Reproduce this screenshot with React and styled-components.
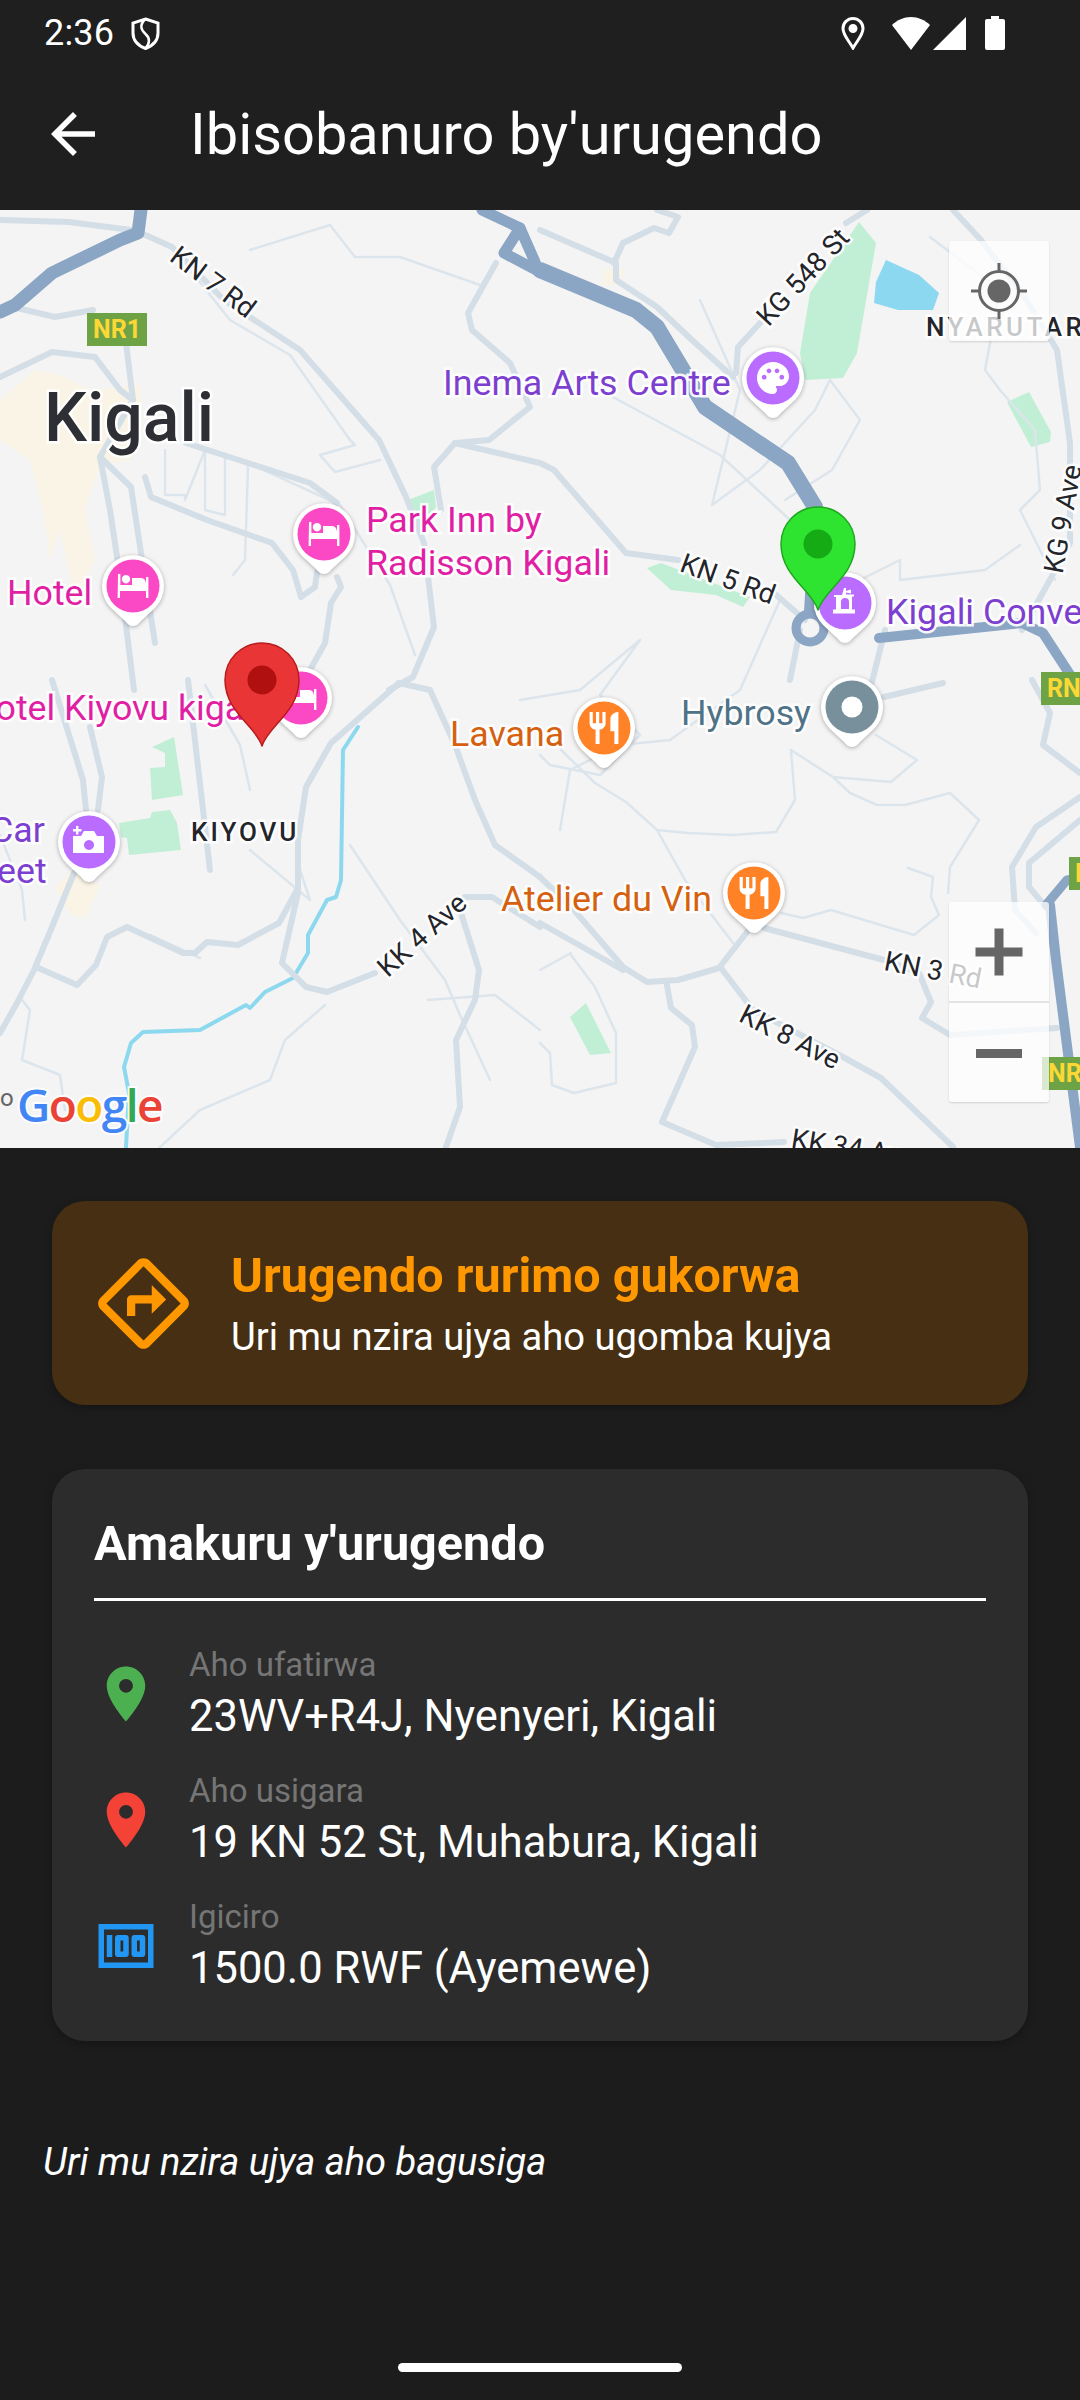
import React from "react";
import styled, { createGlobalStyle } from "styled-components";

const GlobalStyle = createGlobalStyle`
  html, body {
    margin: 0;
    padding: 0;
    background: #1c1c1c;
  }
  * {
    box-sizing: border-box;
  }
`;

// road data is in page pixels, the svg viewBox starts at the top of the map
const mainRoads = [
  { points: "0,312 15,305 52,273 120,240 138,233 141,210", width: 13 },
  { points: "482,210 520,228 535,262", width: 11 },
  { points: "520,228 504,253 540,272", width: 11 },
  { points: "540,270 636,310 657,327 705,407 788,463 815,507", width: 16 },
  { points: "815,507 809,612", width: 10 },
  { points: "879,638 1022,623 1043,633 1080,690", width: 10 },
  { points: "1046,905 1067,880 1080,878", width: 9 },
  { points: "1050,905 1056,960 1080,1147", width: 10 },
];

const roads = [
  "141,233 172,247 224,300 300,350 379,440 406,497 424,543 434,627 413,677 389,690",
  "0,220 69,222 131,230",
  "17,308 55,317 93,310",
  "126,343 133,400 100,457 110,510 120,577 134,690",
  "186,443 248,463 310,483 337,503",
  "100,457 131,487 141,553 155,643",
  "145,477 151,497 207,520 272,543 293,570 301,597 315,587 317,572",
  "337,577 341,587 331,603 325,643 310,670",
  "0,377 52,352 95,357 120,390 133,400",
  "496,263 468,313 472,330 510,363 530,407 489,440 455,443 434,467 441,510",
  "455,443 540,463 554,470 626,553 678,560",
  "774,593 805,620",
  "540,230 616,263 616,280 657,307 692,340 733,377",
  "614,263 623,243 654,228 669,233 678,217 657,210",
  "760,323 738,347 736,373",
  "846,223 867,210",
  "953,210 981,240 1022,293 1057,350 1070,443 1070,543 1046,587 1022,630",
  "52,680 83,780 86,810",
  "90,727 102,777 98,810",
  "188,680 210,870",
  "399,683 331,743 306,787 298,840 298,893 282,963 306,987 327,992 375,973",
  "465,897 492,897 540,927",
  "298,888 279,923 238,945 207,942 195,953 183,953 127,927 107,937 96,965 77,985 36,967",
  "74,873 52,927 34,970 17,1003 0,1033",
  "461,913 479,970 475,1000 456,1040 460,1107 446,1147",
  "399,683 430,690 455,745 475,800 495,845 540,877",
  "540,877 574,910 623,967 647,982 678,980 719,968 747,932",
  "540,923 623,970",
  "764,928 884,960 919,973 931,1002 922,1018 950,1035 1057,1028",
  "721,968 753,1010 843,1057 881,1078 953,1147",
  "667,985 671,1008 692,1025 695,1047 662,1122 716,1145 784,1142",
  "1032,680 1050,713 1043,745 1080,773",
  "1080,797 1036,827 1012,867 1015,910 1036,933",
  "1080,820 1029,863 1029,887 1046,907",
  "943,683 884,697",
  "800,630 790,680",
  "885,630 870,690",
];

const thinRoads = [
  "791,750 795,800 776,832 733,835 688,833 657,830 626,802 595,783 561,750",
  "657,830 685,880 733,943",
  "791,750 833,777 891,782 917,760 876,735",
  "833,777 850,793 877,805 905,805 950,793 979,820 950,867 948,893",
  "781,913 803,918 831,910 914,935 939,915 931,897 933,877 908,868",
  "571,953 540,970",
  "571,955 595,987 616,1033 616,1083 574,1093 552,1085 550,1053 540,1043",
  "172,247 230,320 290,355 350,440 355,445 320,455 335,472 380,460",
  "165,450 165,495 185,495 185,500 205,450 205,510 225,515 225,455 248,465 245,560 233,575",
  "248,463 340,505 390,585 415,655",
  "250,250 330,225 355,257 400,257 480,285",
  "700,300 740,390 712,505 760,470 815,410 830,380 860,420 832,470 785,500",
  "600,390 720,455 790,520 810,590",
  "930,237 1000,290 985,370 1000,390 1035,430 1040,490 1020,510 1055,580",
  "840,590 900,560 900,580 985,570 1020,545",
  "780,600 740,690 670,740 620,745 570,770 560,830",
  "640,640 600,695 640,735 600,775 550,765 540,755",
  "520,700 580,690 640,640",
  "250,790 240,745 205,685",
  "250,850 310,900 300,870",
  "350,845 400,920 445,980 460,1015 490,1080",
  "428,1000 495,995 540,1030",
  "325,1005 285,1040 270,1080 200,1110 130,1175",
  "22,1000 30,1010 22,1060 60,1075 65,1110",
  "0,835 22,890 25,920",
  "150,935 200,958",
];

const parks = [
  "152,747 174,737 183,795 152,800 150,768 165,767 165,753",
  "119,823 150,818 152,812 170,810 177,823 181,850 129,855 127,838 121,837",
  "859,222 876,243 857,353 843,378 805,380 800,353 810,293",
  "1007,402 1029,392 1051,432 1050,442 1031,447",
  "647,568 661,563 750,597 743,607 716,595 671,590",
  "408,500 434,490 436,507 417,533",
  "570,1017 586,1003 611,1053 590,1055",
];

const sand = [
  "0,400 35,370 60,375 90,390 140,385 142,430 130,460 100,465 88,500 85,510 95,560 75,600 60,530 50,560 45,520 30,460 0,440",
  "55,887 72,870 100,885 85,918 70,915",
  "604,270 624,268 620,285 602,285",
];

const river =
  "358,727 343,750 341,880 336,897 327,900 308,935 308,953 293,978 265,992 250,1008 246,1005 200,1030 143,1032 131,1043 124,1067 129,1093 126,1147";
const water = "886,260 919,275 939,293 933,310 898,310 874,303 876,282";

const PURPLE = "#7c3fd0";
const PINK = "#e01fa4";
const ORANGE = "#d5610f";
const DARK = "#23252a";

const labels = [
  { text: "Kigali", x: 44, y: 416, size: 68, weight: 500, color: "#2d2f34" },
  { text: "Inema Arts Centre", x: 443, y: 382, size: 35.75, color: PURPLE },
  { text: "Park Inn by", x: 366, y: 519, size: 35.75, color: PINK },
  { text: "Radisson Kigali", x: 366, y: 562, size: 35.75, color: PINK },
  { text: "Hotel", x: 7, y: 592, size: 35.75, color: PINK },
  { text: "Hotel Kiyovu kigali", x: -30, y: 707, size: 35.75, color: PINK },
  { text: "Car", x: -10, y: 829, size: 35.75, color: PURPLE },
  { text: "eet", x: -3, y: 870, size: 35.75, color: PURPLE },
  { text: "Kigali Convention Centre", x: 886, y: 611, size: 35.75, color: PURPLE },
  { text: "Hybrosy", x: 681, y: 712, size: 35.75, color: "#4f7287" },
  { text: "Lavana", x: 450, y: 733, size: 35.75, color: ORANGE },
  { text: "Atelier du Vin", x: 501, y: 898, size: 35.75, color: ORANGE },
  { text: "KIYOVU", x: 191, y: 830, size: 26, weight: 500, spacing: 3, color: DARK },
  { text: "NYARUTARAMA", x: 926, y: 325, size: 26, weight: 500, spacing: 3.5, color: DARK },
  { text: "KN 7 Rd", x: 213, y: 280, size: 27.5, rotate: 37, center: true, color: DARK },
  { text: "KG 548 St", x: 803, y: 275, size: 27.5, rotate: -47, center: true, color: DARK },
  { text: "KN 5 Rd", x: 728, y: 577, size: 27.5, rotate: 20, center: true, color: DARK },
  { text: "KG 9 Ave", x: 1063, y: 517, size: 27.5, rotate: -80, center: true, color: DARK },
  { text: "KK 4 Ave", x: 422, y: 933, size: 27.5, rotate: -42, center: true, color: DARK },
  { text: "KK 8 Ave", x: 790, y: 1035, size: 27.5, rotate: 27, center: true, color: DARK },
  { text: "KN 3 Rd", x: 933, y: 968, size: 27.5, rotate: 11, center: true, color: DARK },
  { text: "KK 34 Ave", x: 853, y: 1146, size: 27.5, rotate: 9, center: true, color: DARK },
];

const shields = [
  { text: "NR1", x: 87, y: 313, w: 60 },
  { text: "RN1", x: 1041, y: 672, w: 60 },
  { text: "NR1", x: 1069, y: 857, w: 60 },
  { text: "NR1", x: 1042, y: 1057, w: 60 },
];

const BedGlyph = () => (
  <path d="M-15 -12h2.4v11H13v-8h2.4V12H13V5h-26v7h-2.4z M-7 -11a4.2 4.2 0 1 1 -.01 0z M-1 -8h9c2.5 0 5 2 5 6v1H-1z" />
);
const PaletteGlyph = () => (
  <g transform="translate(-19.2 -19.2) scale(1.6)">
    <path d="M12 2C6.49 2 2 6.49 2 12s4.49 10 10 10c1.38 0 2.5-1.12 2.5-2.5 0-.61-.23-1.2-.64-1.67-.08-.1-.13-.21-.13-.33 0-.28.22-.5.5-.5H16c3.31 0 6-2.69 6-6 0-4.96-4.49-9-10-9zm5.5 11c-.83 0-1.5-.67-1.5-1.5s.67-1.5 1.5-1.5 1.5.67 1.5 1.5-.67 1.5-1.5 1.5zm-3-4c-.83 0-1.5-.67-1.5-1.5S13.67 6 14.5 6s1.5.67 1.5 1.5S15.33 9 14.5 9zM5 11.5c0-.83.67-1.5 1.5-1.5s1.5.67 1.5 1.5S7.33 13 6.5 13 5 12.33 5 11.5zm6-4c0 .83-.67 1.5-1.5 1.5S8 8.33 8 7.5 8.67 6 9.5 6s1.5.67 1.5 1.5z" />
  </g>
);
const CameraGlyph = () => (
  <path
    fillRule="evenodd"
    d="M-16 -6h8l3 -5h10l3 5h7v17h-31z M0 -2a5 5 0 1 0 .01 0z M-16 -13h3v-3h2.4v3h3v2.4h-3v3h-2.4v-3h-3z"
  />
);
const MuseumGlyph = () => (
  <path
    fillRule="evenodd"
    d="M-1 -15h2v3l5 -1.5v4l-5 -1v2h8v2h-2v13h3v4h-22v-4h3V-6h-2v-2h8z M-4 -1v7h8v-7a4 4 0 0 0 -8 0z"
  />
);
const FoodGlyph = () => (
  <g transform="translate(-19.2 -19.2) scale(1.6)">
    <path d="M11 9H9V2H7v7H5V2H3v7c0 2.12 1.66 3.84 3.75 3.97V22h2.5v-9.03C11.34 12.84 13 11.12 13 9V2h-2v7zm5-3v8h2.5v8H21V2c-2.76 0-5 2.24-5 4z" />
  </g>
);
const DotGlyph = () => <circle r="10.5" />;

const pois = [
  { x: 324, y: 534, color: "#fb48c4", Glyph: BedGlyph },
  { x: 133, y: 586, color: "#fb48c4", Glyph: BedGlyph },
  { x: 301, y: 698, color: "#fb48c4", Glyph: BedGlyph },
  { x: 89, y: 842, color: "#b96cff", Glyph: CameraGlyph },
  { x: 773, y: 378, color: "#b96cff", Glyph: PaletteGlyph },
  { x: 845, y: 603, color: "#b96cff", Glyph: MuseumGlyph },
  { x: 852, y: 707, color: "#78909c", Glyph: DotGlyph },
  { x: 604, y: 728, color: "#ff8226", Glyph: FoodGlyph },
  { x: 754, y: 893, color: "#ff8226", Glyph: FoodGlyph },
];

const Page = styled.div`
  width: 1080px;
  height: 2400px;
  background: #1c1c1c;
  color: #fff;
  font-family: Roboto, "Liberation Sans", sans-serif;
  display: flex;
  flex-direction: column;
  overflow: hidden;
`;

const StatusBar = styled.div`
  height: 66px;
  padding: 0 75px 0 44px;
  background: #1f1f1f;
  display: flex;
  align-items: center;
  justify-content: space-between;
`;

const StatusTime = styled.div`
  display: flex;
  align-items: center;
  gap: 17px;
  font-size: 36px;
  letter-spacing: 0.2px;
`;

const StatusIcons = styled.div`
  display: flex;
  align-items: center;
`;

const StatusGlyph = styled.svg`
  display: block;
  margin-right: ${(p) => p.$gap || 0}px;
`;

const AppBar = styled.header`
  height: 144px;
  background: #1f1f1f;
  display: flex;
  align-items: center;
  padding-left: 40px;
  padding-bottom: 8px;
`;

const BackIcon = styled.svg`
  width: 66px;
  height: 66px;
  fill: #fff;
  margin-right: 84px;
`;

const Title = styled.h1`
  margin: 0;
  font-size: 57.75px;
  font-weight: 400;
`;

const MapArea = styled.section`
  position: relative;
  height: 938px;
  background: #f4f4f4;
  overflow: hidden;
  flex: none;
`;

const MapSvg = styled.svg`
  position: absolute;
  inset: 0;
  width: 1080px;
  height: 938px;
`;

const MapLabel = styled.div`
  position: absolute;
  left: ${(p) => p.$x}px;
  top: ${(p) => p.$y - 208}px;
  transform: translate(${(p) => (p.$center ? "-50%" : "0")}, -50%) rotate(${(p) => p.$rotate || 0}deg);
  font-size: ${(p) => p.$size}px;
  font-weight: ${(p) => p.$weight || 400};
  letter-spacing: ${(p) => p.$spacing || 0}px;
  color: ${(p) => p.$color};
  white-space: nowrap;
  line-height: 1;
  -webkit-text-stroke: 5px rgba(255, 255, 255, 0.92);
  paint-order: stroke fill;
`;

const Shield = styled.div`
  position: absolute;
  left: ${(p) => p.$x}px;
  top: ${(p) => p.$y - 210}px;
  width: ${(p) => p.$w}px;
  height: 33px;
  background: #6ea345;
  color: #fdd835;
  font-size: 25px;
  font-weight: 700;
  display: flex;
  align-items: center;
  justify-content: center;
`;

const Poi = styled.svg`
  position: absolute;
  left: ${(p) => p.$x - 40}px;
  top: ${(p) => p.$y - 250}px;
  width: 80px;
  height: 90px;
  filter: drop-shadow(0 1px 2px rgba(0, 0, 0, 0.3));
`;

const Pin = styled.svg`
  position: absolute;
  left: ${(p) => p.$x - 40}px;
  top: ${(p) => p.$y - 250}px;
  width: 80px;
  height: 115px;
`;

const GoogleMark = styled.div`
  position: absolute;
  left: 17px;
  bottom: 21px;
  font-family: "Open Sans", Roboto, sans-serif;
  font-size: 46px;
  font-weight: 600;
  letter-spacing: -1.6px;
  line-height: 1;
  -webkit-text-stroke: 4px rgba(255, 255, 255, 0.85);
  paint-order: stroke fill;
`;

const GoogleLetter = styled.span`
  color: ${(p) => p.$color};
`;

const Remnant = styled.div`
  position: absolute;
  left: 0;
  bottom: 36px;
  font-size: 24px;
  color: #666;
`;

const MapButton = styled.div`
  position: absolute;
  left: 949px;
  width: 100px;
  height: 100px;
  background: rgba(255, 255, 255, 0.75);
  border-radius: 3px;
  box-shadow: 0 1px 2px rgba(0, 0, 0, 0.15);
  display: flex;
  align-items: center;
  justify-content: center;
  top: ${(p) => p.$top}px;
`;

const ZoomGroup = styled.div`
  position: absolute;
  left: 949px;
  top: 692px;
  width: 100px;
  height: 200px;
  background: rgba(255, 255, 255, 0.75);
  border-radius: 3px;
  box-shadow: 0 1px 2px rgba(0, 0, 0, 0.15);
  display: flex;
  flex-direction: column;
`;

const ZoomButton = styled.div`
  flex: 1;
  display: flex;
  align-items: center;
  justify-content: center;
  border-bottom: ${(p) => (p.$divider ? "2px solid rgba(220, 220, 220, 0.8)" : "none")};
`;

const MapIcon = styled.svg`
  width: 60px;
  height: 60px;
  fill: #666;
`;

const Content = styled.main`
  flex: 1;
  padding: 53px 52px 0;
  display: flex;
  flex-direction: column;
`;

const StatusCard = styled.div`
  height: 204px;
  background: #462f12;
  border-radius: 33px;
  box-shadow: 0 3px 8px rgba(0, 0, 0, 0.25);
  padding: 0 0 0 42px;
  display: flex;
  align-items: center;
  gap: 38px;
`;

const DirectionIcon = styled.svg`
  width: 99px;
  height: 99px;
  fill: #ff9800;
  flex: none;
`;

const StatusTitle = styled.div`
  font-size: 48.5px;
  font-weight: 700;
  color: #ff9800;
  line-height: 58px;
  margin-bottom: 9px;
`;

const StatusText = styled.div`
  font-size: 38.2px;
  line-height: 46px;
`;

const InfoCard = styled.div`
  margin-top: 64px;
  height: 572px;
  background: #2c2c2c;
  border-radius: 33px;
  box-shadow: 0 3px 8px rgba(0, 0, 0, 0.25);
  padding: 46px 42px 0;
`;

const InfoHeading = styled.h2`
  margin: 0;
  font-size: 48.6px;
  font-weight: 700;
  line-height: 58px;
`;

const Divider = styled.div`
  height: 3px;
  background: #fff;
  margin: 25px 0 32px;
`;

const InfoRow = styled.div`
  height: 126px;
  padding-bottom: 4px;
  display: flex;
  align-items: center;
`;

const RowIcon = styled.svg`
  width: 66px;
  height: 66px;
  flex: none;
  fill: ${(p) => p.$color};
  margin: 0 30px 0 -1px;
`;

const RowLabel = styled.div`
  font-size: 33px;
  line-height: 36px;
  color: #757575;
`;

const RowValue = styled.div`
  font-size: 43.5px;
  line-height: 50px;
  margin-top: 9px;
`;

const Note = styled.div`
  margin: 99px 0 0 -9px;
  font-size: 38.1px;
  font-style: italic;
  line-height: 44px;
`;

const HomeBar = styled.div`
  position: absolute;
  left: 398px;
  top: 2363px;
  width: 284px;
  height: 9px;
  border-radius: 5px;
  background: #fff;
`;

const Shell = styled.div`
  position: relative;
  width: 1080px;
  height: 2400px;
`;

const PIN_PATH = "M0 66 C-6 46 -37 32 -37 0 A37 37 0 1 1 37 0 C37 32 6 46 0 66Z";
const LOCATION_PATH =
  "M12 2C8.13 2 5 5.13 5 9c0 5.25 7 13 7 13s7-7.75 7-13c0-3.87-3.13-7-7-7zm0 9.5c-1.38 0-2.5-1.12-2.5-2.5s1.12-2.5 2.5-2.5 2.5 1.12 2.5 2.5-1.12 2.5-2.5 2.5z";

const Line = ({ points, color, width }) => (
  <polyline points={points} fill="none" stroke={color} strokeWidth={width} strokeLinejoin="round" strokeLinecap="round" />
);

const MapView = () => (
  <MapArea>
    <MapSvg viewBox="0 210 1080 938">
      {sand.map((p) => (
        <polygon key={p} points={p} fill="#f9f4e6" />
      ))}
      {parks.map((p) => (
        <polygon key={p} points={p} fill="#c0efd5" />
      ))}
      <polygon points={water} fill="#8cd8f0" />
      {thinRoads.map((p) => (
        <Line key={p} points={p} color="#dde5ec" width={2.5} />
      ))}
      <Line points={river} color="#8cd8ee" width={4} />
      {roads.map((p) => (
        <Line key={p} points={p} color="#d4dee7" width={6} />
      ))}
      {mainRoads.map((r) => (
        <Line key={r.points} points={r.points} color="#8ba5c4" width={r.width} />
      ))}
      <circle cx="810" cy="628" r="14" fill="none" stroke="#8ba5c4" strokeWidth="9" />
    </MapSvg>

    {labels.map((l) => (
      <MapLabel
        key={l.text + l.y}
        $x={l.x}
        $y={l.y}
        $size={l.size}
        $weight={l.weight}
        $spacing={l.spacing}
        $rotate={l.rotate}
        $center={l.center}
        $color={l.color}
      >
        {l.text}
      </MapLabel>
    ))}

    {shields.map((s) => (
      <Shield key={s.x} $x={s.x} $y={s.y} $w={s.w}>
        {s.text}
      </Shield>
    ))}

    {pois.map(({ x, y, color, Glyph }) => (
      <Poi key={x} $x={x} $y={y} viewBox="-40 -40 80 90">
        <path d="M0 40 C-4 40 -6 37 -9 34 L-22 22 A31 31 0 1 1 22 22 L9 34 C6 37 4 40 0 40Z" fill="#fff" />
        <circle r="26.5" fill={color} />
        <g fill="#fff">
          <Glyph />
        </g>
      </Poi>
    ))}

    <Pin $x={262} $y={680} viewBox="-40 -40 80 115">
      <path d={PIN_PATH} fill="#e93535" stroke="#b71c1c" strokeWidth="1.5" strokeLinejoin="round" />
      <circle r="14.5" fill="#b01010" />
    </Pin>
    <Pin $x={818} $y={544} viewBox="-40 -40 80 115">
      <path d={PIN_PATH} fill="#2fe331" stroke="#1fa81f" strokeWidth="1.5" strokeLinejoin="round" />
      <circle r="14.5" fill="#14ab14" />
    </Pin>

    <Remnant>o</Remnant>
    <GoogleMark>
      <GoogleLetter $color="#4285f4">G</GoogleLetter>
      <GoogleLetter $color="#ea4335">o</GoogleLetter>
      <GoogleLetter $color="#fbbc05">o</GoogleLetter>
      <GoogleLetter $color="#4285f4">g</GoogleLetter>
      <GoogleLetter $color="#34a853">l</GoogleLetter>
      <GoogleLetter $color="#ea4335">e</GoogleLetter>
    </GoogleMark>

    <MapButton $top={31}>
      <MapIcon viewBox="0 0 60 60">
        <circle cx="30" cy="30" r="11.5" />
        <circle cx="30" cy="30" r="19.5" fill="none" stroke="#666" strokeWidth="3" />
        <path d="M28.5 2h3v8h-3zM28.5 50h3v8h-3zM2 28.5h8v3H2zM50 28.5h8v3h-8z" />
      </MapIcon>
    </MapButton>

    <ZoomGroup>
      <ZoomButton $divider>
        <MapIcon viewBox="0 0 60 60">
          <path d="M26 7h9v19h19v9H35v19h-9V35H7v-9h19z" transform="translate(-0.5 -0.5)" />
        </MapIcon>
      </ZoomButton>
      <ZoomButton>
        <MapIcon viewBox="0 0 60 60">
          <path d="M7 26h46v9H7z" />
        </MapIcon>
      </ZoomButton>
    </ZoomGroup>
  </MapArea>
);

const rows = [
  { label: "Aho ufatirwa", value: "23WV+R4J, Nyenyeri, Kigali", color: "#4caf50", path: LOCATION_PATH },
  { label: "Aho usigara", value: "19 KN 52 St, Muhabura, Kigali", color: "#f44336", path: LOCATION_PATH },
  {
    label: "Igiciro",
    value: "1500.0 RWF (Ayemewe)",
    color: "#2196f3",
    path: "M5 8h2v8H5zm7 0H9c-.55 0-1 .45-1 1v6c0 .55.45 1 1 1h3c.55 0 1-.45 1-1V9c0-.55-.45-1-1-1zm-1 6h-1v-4h1v4zm7-6h-3c-.55 0-1 .45-1 1v6c0 .55.45 1 1 1h3c.55 0 1-.45 1-1V9c0-.55-.45-1-1-1zm-1 6h-1v-4h1v4zM2 4v16h20V4H2zm2 14V6h16v12H4z",
  },
];

const App = () => {
  return (
    <Shell>
      <GlobalStyle />
      <Page>
        <StatusBar>
          <StatusTime>
            2:36
            <StatusGlyph width="29" height="33" viewBox="0 0 29 33" fill="none" stroke="#fff" strokeWidth="3">
              <path d="M14.5 2 L27 6 V16 C27 24 21 29 14.5 31.5 C8 29 2 24 2 16 V6 Z" />
              <path d="M14.5 2 C8 8 10 13 14.5 17 C19 21 19 26 14.5 31.5" strokeWidth="2.5" />
            </StatusGlyph>
          </StatusTime>
          <StatusIcons>
            <StatusGlyph $gap={27} width="24" height="33" viewBox="0 0 24 33" fill="none" stroke="#fff" strokeWidth="3">
              <path d="M12 31 C8 24 2 18 2 11.5 A10 10 0 0 1 22 11.5 C22 18 16 24 12 31Z" />
              <circle cx="12" cy="11.5" r="3" fill="#fff" />
            </StatusGlyph>
            <StatusGlyph $gap={3} width="38" height="33" viewBox="0 0 38 33" fill="#fff">
              <path d="M19 33 L0 8 C5 3 12 0 19 0 C26 0 33 3 38 8Z" />
            </StatusGlyph>
            <StatusGlyph $gap={19} width="33" height="33" viewBox="0 0 33 33" fill="#fff">
              <path d="M33 0 V33 H0Z" />
            </StatusGlyph>
            <StatusGlyph width="20" height="34" viewBox="0 0 20 34" fill="#fff">
              <path d="M6 0h8v3h4a2 2 0 0 1 2 2v27a2 2 0 0 1 -2 2H2a2 2 0 0 1 -2 -2V5a2 2 0 0 1 2 -2h4z" />
            </StatusGlyph>
          </StatusIcons>
        </StatusBar>

        <AppBar>
          <BackIcon viewBox="0 0 24 24">
            <path d="M20 11H7.83l5.59-5.59L12 4l-8 8 8 8 1.41-1.41L7.83 13H20v-2z" />
          </BackIcon>
          <Title>Ibisobanuro by'urugendo</Title>
        </AppBar>

        <MapView />

        <Content>
          <StatusCard>
            <DirectionIcon viewBox="0 0 24 24">
              <path d="M22.43 10.59l-9.01-9.01c-.75-.75-2.07-.76-2.83 0l-9 9c-.78.78-.78 2.04 0 2.82l9 9c.39.39.9.58 1.41.58.51 0 1.02-.19 1.41-.58l8.99-8.99c.79-.76.8-2.02.03-2.82zm-10.42 10.4l-9-9 9-9 9 9-9 9zM8 11v4h2v-3h4v2.5l3.5-3.5L14 7.5V10H9c-.55 0-1 .45-1 1z" />
            </DirectionIcon>
            <div>
              <StatusTitle>Urugendo rurimo gukorwa</StatusTitle>
              <StatusText>Uri mu nzira ujya aho ugomba kujya</StatusText>
            </div>
          </StatusCard>

          <InfoCard>
            <InfoHeading>Amakuru y'urugendo</InfoHeading>
            <Divider />
            {rows.map((r) => (
              <InfoRow key={r.label}>
                <RowIcon viewBox="0 0 24 24" $color={r.color}>
                  <path d={r.path} fillRule="evenodd" />
                </RowIcon>
                <div>
                  <RowLabel>{r.label}</RowLabel>
                  <RowValue>{r.value}</RowValue>
                </div>
              </InfoRow>
            ))}
          </InfoCard>

          <Note>Uri mu nzira ujya aho bagusiga</Note>
        </Content>
      </Page>
      <HomeBar />
    </Shell>
  );
};

export default App;
